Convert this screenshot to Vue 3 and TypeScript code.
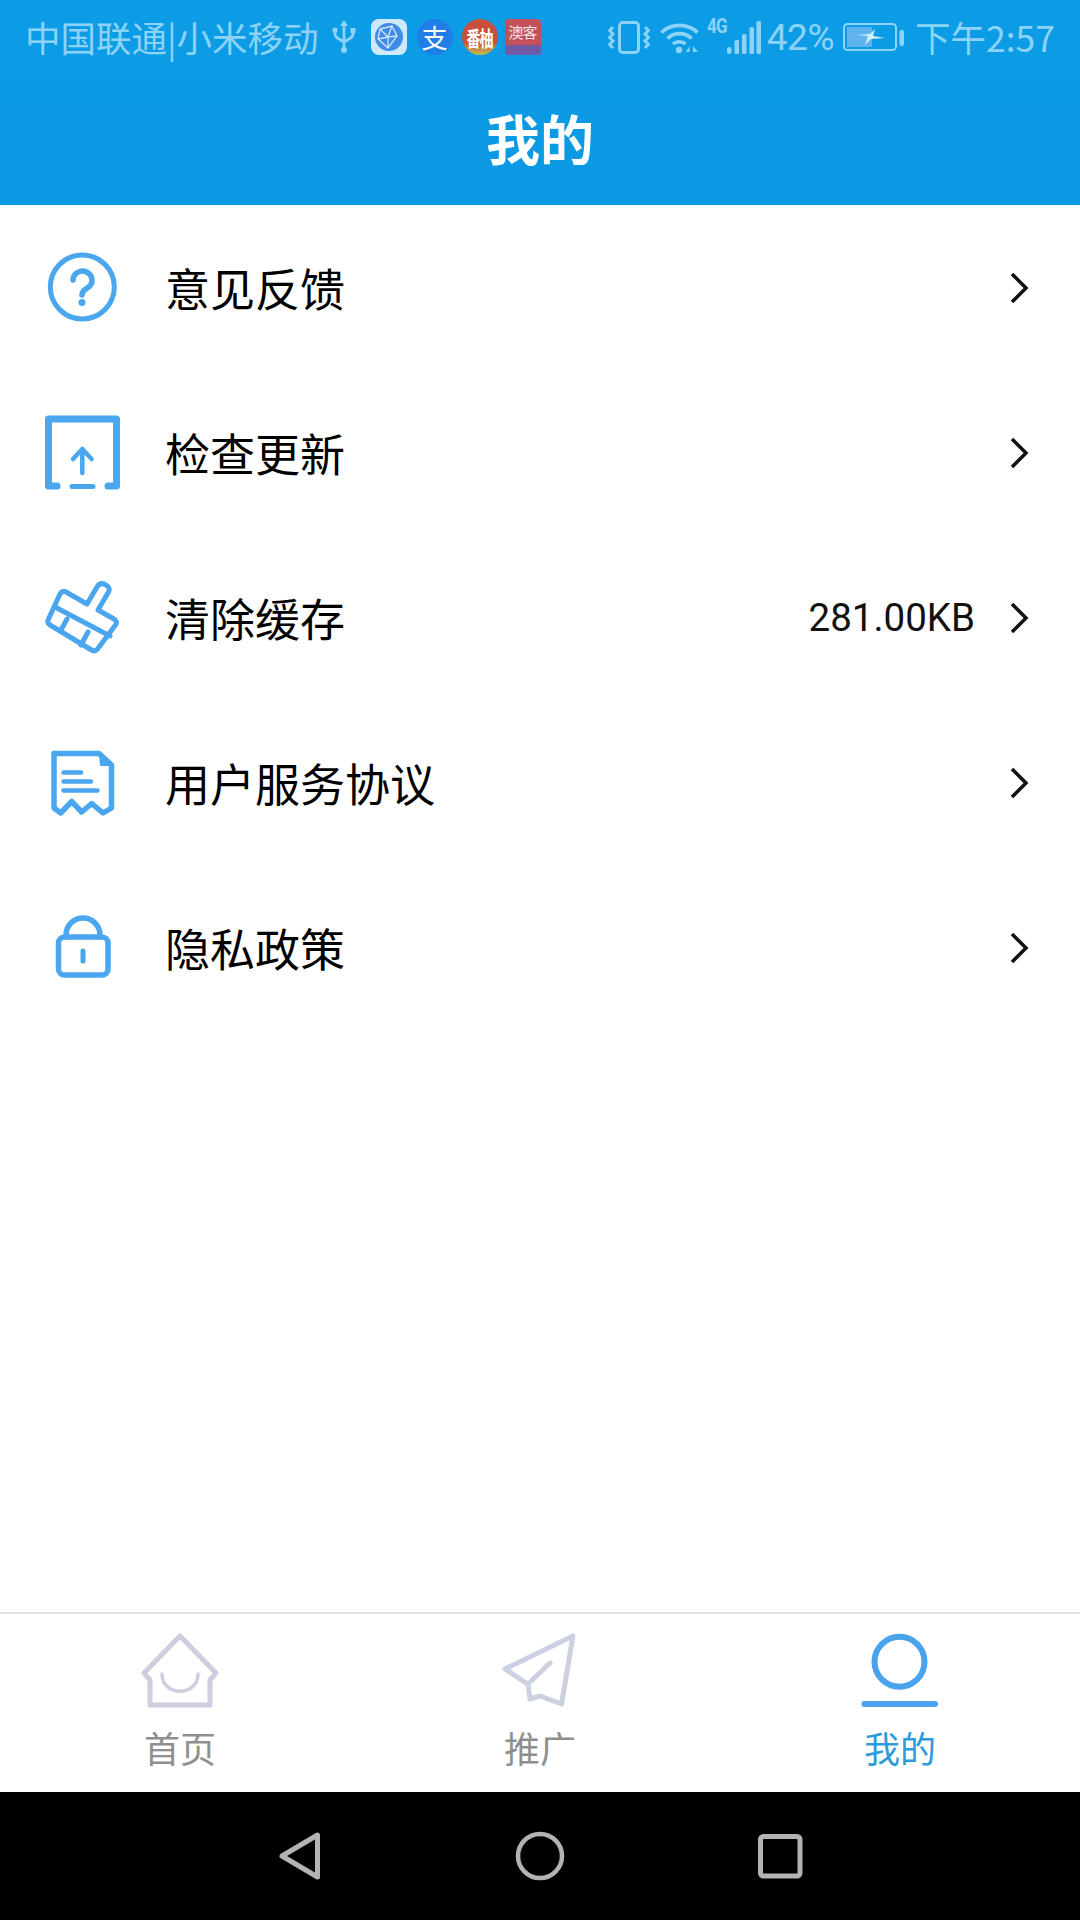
<script setup lang="ts">
interface MenuRow {
  key: string
  name: string
  value?: string
}

const rows: MenuRow[] = [
  { key: 'help', name: '意见反馈' },
  { key: 'update', name: '检查更新' },
  { key: 'clean', name: '清除缓存', value: '281.00KB' },
  { key: 'terms', name: '用户服务协议' },
  { key: 'privacy', name: '隐私政策' },
]
</script>

<template>
  <div class="page">
    <header class="header">
      <!-- Статус-бар -->
      <div class="status">
        <div class="status-left">
          <span class="carrier">中国联通|小米移动</span>
          <svg class="usb" width="24" height="34" viewBox="0 0 24 34" fill="none" stroke="#8dd3f7" stroke-width="2.8">
            <path d="M12 4V31M3 11v3c0 3 2 4 4 5l5 3 5-3c2-1 4-2 4-5v-3" />
            <path d="M12 0l4 6H8z" fill="#8dd3f7" stroke="none" />
            <circle cx="12" cy="30" r="3" fill="#8dd3f7" stroke="none" />
            <circle cx="3" cy="10" r="2.6" fill="#8dd3f7" stroke="none" />
            <rect x="18.5" y="8" width="5" height="5" fill="#8dd3f7" stroke="none" />
          </svg>
          <span class="app app-globe">
            <svg width="28" height="28" viewBox="0 0 28 28">
              <circle cx="14" cy="14" r="14" fill="#3f8ce8" />
              <path d="M5 6l12-3 5 10-9 12L3 16zM5 6l8 8M17 3l-4 11 9-1M13 14v11M13 14L3 16" fill="none" stroke="#cfe6fb" stroke-width="1.3" />
            </svg>
          </span>
          <span class="app app-alipay">支</span>
          <span class="app app-fruit"><i>番柚</i></span>
          <span class="app app-aoke"><i>澳客</i><b></b></span>
        </div>

        <div class="status-right">
          <svg width="42" height="33" viewBox="0 0 42 33" fill="none" stroke="#8dd3f7" stroke-width="3">
            <rect x="11.5" y="1.5" width="19" height="30" rx="3.5" />
            <path d="M5 6L1.5 9.5 5 13 1.5 16.5 5 20 1.5 23.5 5 27M37 6l3.5 3.5L37 13l3.5 3.5L37 20l3.5 3.5L37 27" />
          </svg>
          <svg class="wifi" width="40" height="33" viewBox="0 0 40 33" fill="none" stroke="#8dd3f7" stroke-width="3.6">
            <path d="M1.500 11.500C11 2 28 2 37.500 11.500M7.500 17.500C14 11 25 11 31.500 17.500M13 23c3.500-3 9.500-3 12.500 0" />
            <circle cx="19" cy="29" r="3.200" fill="#8dd3f7" stroke="none" />
            <path d="M26 31l3.500-6v6zM33 25l5 6h-5z" fill="#8dd3f7" stroke="none" />
          </svg>
          <span class="net">4G</span>
          <svg class="signal" width="34" height="33" viewBox="0 0 34 33" fill="#8dd3f7">
            <rect x="0" y="26" width="4.500" height="7" rx="2" />
            <rect x="7.500" y="19" width="4.500" height="14" rx="1.500" />
            <rect x="15" y="13" width="4.500" height="20" rx="1.500" />
            <rect x="22.500" y="6" width="4.500" height="27" rx="1.500" />
            <rect x="29.500" y="0" width="4.500" height="33" rx="1.500" />
          </svg>
          <span class="percent">42%</span>
          <svg class="battery" width="61" height="28" viewBox="0 0 61 28">
            <rect x="1" y="1" width="52" height="26" rx="3.500" fill="none" stroke="#8dd3f7" stroke-width="2" />
            <rect x="4" y="4" width="25" height="20" fill="#5fb4ef" />
            <path d="M14 12l13-1 5-5-2 7 12 2-14 1-6 6 3-9z" fill="#d3eefb" />
            <rect x="56.500" y="7" width="4.500" height="16" rx="2" fill="#8dd3f7" />
          </svg>
          <span class="clock">下午2:57</span>
        </div>
      </div>

      <h1 class="title">我的</h1>
    </header>

    <!-- Список пунктов меню -->
    <main class="list">
      <div v-for="row in rows" :key="row.key" class="row">
        <svg class="row-icon" width="80" height="80" viewBox="0 0 80 80" fill="none" stroke="#4aa6ee" stroke-linecap="round" stroke-linejoin="round">
          <g v-if="row.key === 'help'">
            <circle cx="40.300" cy="39" r="32" stroke-width="5" />
            <path d="M31 32a9.500 9 0 1 1 15 7.500c-3.500 2.500-6 3.500-6 7.500" stroke-width="5.500" />
            <circle cx="40" cy="54.500" r="3.500" fill="#4aa6ee" stroke="none" />
          </g>
          <g v-else-if="row.key === 'update'">
            <path d="M15 73H6.500V6H74.500V73H66" stroke-width="7" />
            <path d="M30 73.500H51" stroke-width="5" />
            <path d="M31 46l9.300-10 9.300 10M40.300 37V60" stroke-width="4.500" />
          </g>
          <g v-else-if="row.key === 'clean'">
            <path d="M24 14L45 26 55 9Q58 4 63 6.500 69 9.500 66.500 14L56 32 72 41Q76 43.500 73.500 47L55.500 71Q53 74 49.500 72L8 47Q4.500 44.500 6.500 41L18 16Q20.500 12 24 14Z" stroke-width="5" />
            <path d="M13 29L68 58M25 41L19 52M46 54L39 67" stroke-width="5" />
          </g>
          <g v-else-if="row.key === 'terms'">
            <path d="M12 10.500H57L69.500 22V65L61 70 49.700 60.500 39.700 69 29.700 58.500 18.700 70 12 65z" stroke-width="5.500" />
            <path d="M58 12l11 10H59z" fill="#4aa6ee" stroke-width="2" />
            <path d="M21.500 29.500H39M21.500 38.500H49M21.500 47.500H55.500" stroke-width="4.500" />
          </g>
          <g v-else>
            <rect x="16.500" y="29" width="49.500" height="38" rx="6" stroke-width="5.500" />
            <path d="M24 29v-2a17 17 0 0 1 34 0v2" stroke-width="5.500" />
            <path d="M41 43V53" stroke-width="5" />
          </g>
        </svg>
        <span class="row-name">{{ row.name }}</span>
        <span v-if="row.value" class="row-value">{{ row.value }}</span>
        <svg class="chevron" width="20" height="34" viewBox="0 0 20 34" fill="none" stroke="#111" stroke-width="3.500">
          <path d="M3 3L17 17 3 31" />
        </svg>
      </div>
    </main>

    <!-- Нижние вкладки -->
    <nav class="tabs">
      <div class="tab">
        <svg width="100" height="80" viewBox="0 0 100 80" fill="none" stroke="#cdcedf" stroke-width="5" stroke-linecap="round" stroke-linejoin="round">
          <path d="M20 49l-6-7L50 5l36 37-6 7V74H20z" />
          <path d="M32 43c0 23 36 23 36 0" stroke-width="3.500" />
        </svg>
        <span>首页</span>
      </div>
      <div class="tab">
        <svg width="100" height="80" viewBox="0 0 100 80" fill="none" stroke="#cdd0e0" stroke-width="5" stroke-linecap="round" stroke-linejoin="round">
          <path d="M36 52L15 38 83 5 71.500 73 50 65 40 68 38 53 60 32" />
        </svg>
        <span>推广</span>
      </div>
      <div class="tab active">
        <svg width="100" height="80" viewBox="0 0 100 80" fill="none" stroke="#4aa3eb" stroke-width="6" stroke-linecap="round">
          <circle cx="49.500" cy="30.700" r="25" />
          <path d="M14.500 73H85" />
        </svg>
        <span>我的</span>
      </div>
    </nav>

    <!-- Системная навигация -->
    <footer class="system-nav">
      <svg width="60" height="60" viewBox="0 0 60 60" fill="none" stroke="#b3b3b3" stroke-width="5" stroke-linejoin="round">
        <path d="M12 30L47.500 9V51z" />
      </svg>
      <svg width="60" height="60" viewBox="0 0 60 60" fill="none" stroke="#b3b3b3" stroke-width="4.500">
        <circle cx="30" cy="30" r="22" />
      </svg>
      <svg width="60" height="60" viewBox="0 0 60 60" fill="none" stroke="#b3b3b3" stroke-width="5">
        <rect x="10.500" y="10.500" width="39.500" height="39.500" rx="3" />
      </svg>
    </footer>
  </div>
</template>

<style scoped>
.page {
  display: flex;
  flex-direction: column;
  width: 1080px;
  height: 1920px;
  background: #fff;
  font-family: "Noto Sans CJK SC", Roboto, sans-serif;
  overflow: hidden;
}

.header {
  flex: none;
  height: 205px;
  background: linear-gradient(#0d9ce6, #0a98e2);
  color: #fff;
}

.status {
  display: flex;
  justify-content: space-between;
  align-items: center;
  height: 74px;
  padding: 0 25px 0 25px;
  color: #8dd3f7;
}

.status-left,
.status-right {
  display: flex;
  align-items: center;
}

.carrier,
.clock {
  font-size: 35.500px;
  line-height: 38px;
  white-space: nowrap;
}

.usb {
  margin-left: 13px;
}

.app {
  display: flex;
  align-items: center;
  justify-content: center;
  flex: none;
  width: 36px;
  height: 36px;
  overflow: hidden;
}

.app i {
  font-style: normal;
}

.app-globe {
  margin-left: 15px;
  background: #cfe8fb;
  border-radius: 8px;
}

.app-alipay {
  margin-left: 10px;
  background: #1f7ee8;
  border-radius: 50%;
  color: #fff;
  font-size: 26px;
  line-height: 36px;
}

.app-fruit {
  margin-left: 9px;
  background: linear-gradient(#c94f3c 65%, #c6c24d);
  border-radius: 50%;
  color: #fff;
  font-size: 14px;
  font-weight: 700;
  letter-spacing: -1px;
}

.app-fruit i {
  transform: scaleY(1.5);
}

.app-aoke {
  flex-direction: column;
  margin-left: 7px;
  background: #c4505b;
  border-radius: 4px;
  color: #f3dfe0;
  font-size: 15px;
  line-height: 26px;
  letter-spacing: -1px;
}

.app-aoke b {
  width: 100%;
  height: 10px;
  background: #6f5aa8;
}

.wifi {
  margin-left: 10px;
}

.net {
  align-self: flex-start;
  margin: 0 0 0 7px;
  width: 20px;
  font-family: Roboto, sans-serif;
  font-size: 20px;
  line-height: 20px;
  font-weight: 700;
  letter-spacing: -1px;
  transform: scaleX(0.85);
  transform-origin: left;
}

.percent {
  margin: 2px 0 0 5.500px;
  font-family: Roboto, sans-serif;
  font-size: 37px;
  line-height: 40px;
  letter-spacing: -0.500px;
}

.battery {
  margin-left: 9px;
}

.clock {
  margin-left: 11px;
}

.title {
  margin: 0;
  height: 127px;
  font-size: 54px;
  line-height: 127px;
  font-weight: 700;
  text-align: center;
}

.list {
  flex: 1;
  background: #fff;
}

.row {
  display: flex;
  align-items: center;
  height: 165px;
  padding: 0 51px 0 42px;
}

.row-icon {
  flex: none;
  margin-right: 43px;
}

.row-name {
  flex: 1;
  margin-top: -1px;
  font-size: 45px;
  color: #000;
}

.row-value {
  margin-right: 34px;
  font-family: Roboto, sans-serif;
  font-size: 38.500px;
  color: #111;
}

.chevron {
  flex: none;
}

.tabs {
  display: grid;
  grid-template-columns: repeat(3, 1fr);
  flex: none;
  height: 180px;
  border-top: 2px solid #e2e2e2;
  box-sizing: border-box;
  background: #fff;
}

.tab {
  display: flex;
  flex-direction: column;
  align-items: center;
  padding-top: 17px;
  color: #8f8f8f;
  font-size: 36px;
  line-height: 50px;
}

.tab span {
  margin-top: 11px;
}

.tab.active {
  color: #2f9ad9;
}

.system-nav {
  display: grid;
  grid-template-columns: repeat(3, 240px);
  justify-content: center;
  justify-items: center;
  align-items: center;
  flex: none;
  height: 128px;
  background: #000;
}
</style>
